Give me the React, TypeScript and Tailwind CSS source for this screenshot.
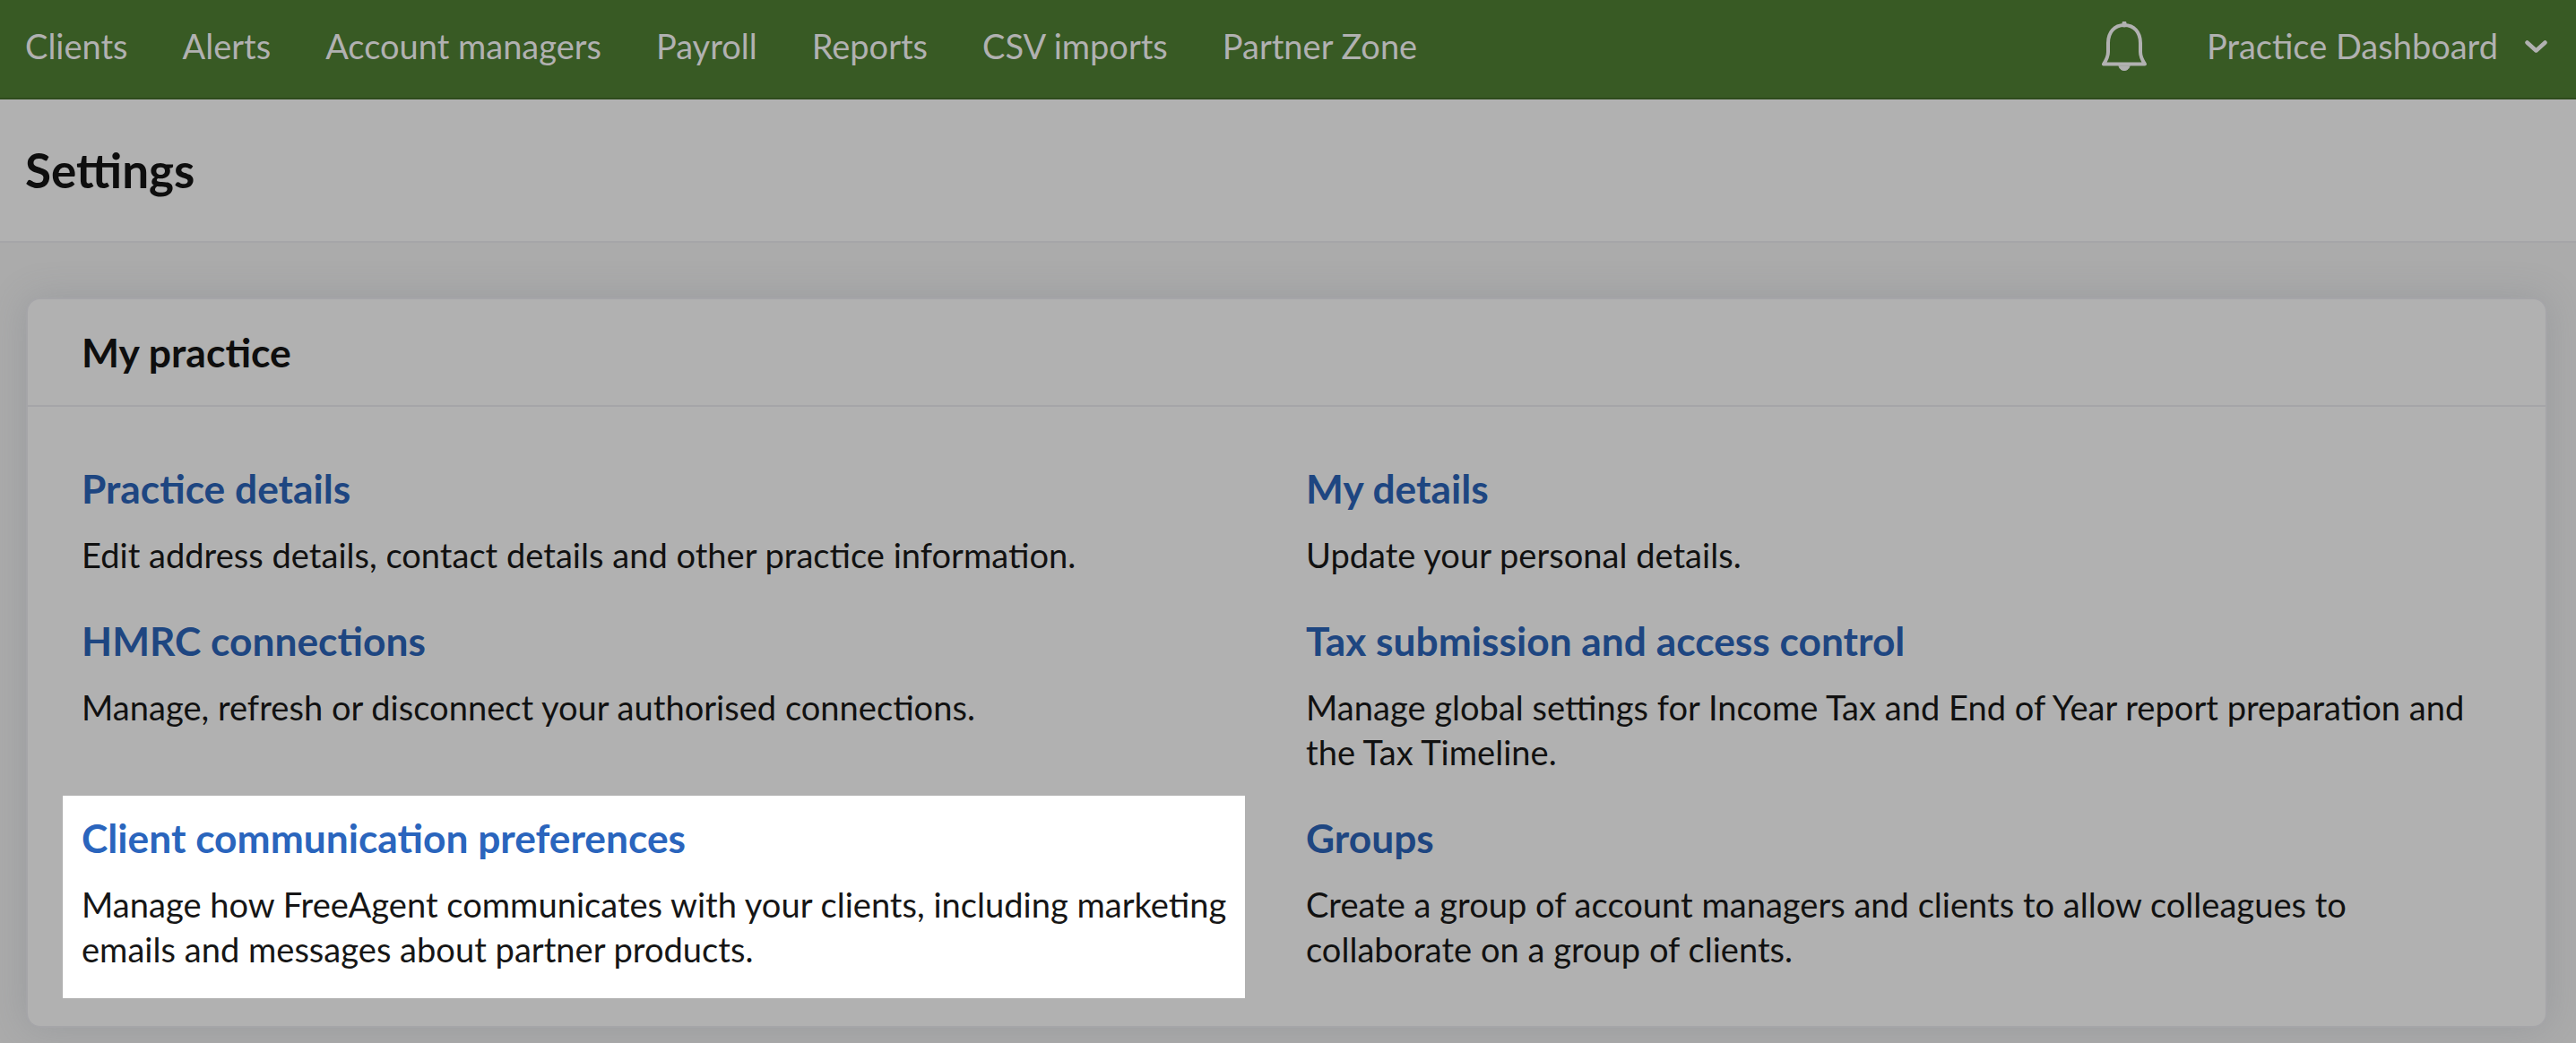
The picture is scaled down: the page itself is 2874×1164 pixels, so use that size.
import React from "react";

const navItems = ["Clients", "Alerts", "Account managers", "Payroll", "Reports", "CSV imports", "Partner Zone"];

function Bell() {
	return (
		<svg viewBox="0 0 50 56" className="h-[56px] w-[50px]" fill="none" stroke="#b1b1b1" strokeWidth="4" strokeLinejoin="round" strokeLinecap="round">
			<path d="M25 4C14 4 7 12 7 24v10c0 5-2 9-5 13.500h46c-3-4.500-5-8.500-5-13.500V24C43 12 36 4 25 4z" />
			<path d="M25 2v2" strokeWidth="5" />
			<path d="M19 49.500c.5 3.500 3 5 6 5s5.500-1.500 6-5z" fill="#b1b1b1" strokeWidth="1" />
		</svg>
	);
}

function Setting({ title, children }: { title: string; children: React.ReactNode }) {
	return (
		<div>
			<a className="block text-[44.300px] leading-[50px] font-bold text-[#1e4681]">{title}</a>
			<p className="mt-[24px] mb-[1px] text-[38.100px] leading-[50px] text-[#111111]">{children}</p>
		</div>
	);
}

export default function App() {
	return (
		<div className="min-h-[1164px] overflow-hidden bg-[#ababab] font-['Lato','Liberation_Sans',sans-serif]">
			<nav className="flex h-[111px] items-center border-b-2 border-[#2f4c1e] bg-[#385a24] pr-[32px] pb-[6px] pl-[28px] text-[38px] text-[#b1b1b1]">
				<div className="flex flex-1 gap-[61px]">
					{navItems.map((item) => (
						<a key={item}>{item}</a>
					))}
				</div>
				<Bell />
				<span className="ml-[67px]">Practice Dashboard</span>
				<svg viewBox="0 0 25 14" className="ml-[30px] h-[14px] w-[25px]" fill="none" stroke="#b1b1b1" strokeWidth="4.500" strokeLinecap="round" strokeLinejoin="round">
					<path d="M2.500 2.500l10 9 10-9" />
				</svg>
			</nav>

			<header className="flex h-[160px] items-center border-b-2 border-[#a5a5a8] bg-[#b1b1b1] pl-[28px]">
				<h1 className="text-[53px] font-bold text-[#0e0e0e]">Settings</h1>
			</header>

			<div className="pt-[61px] pr-[32px] pb-[18px] pl-[29px]">
				<section className="rounded-[16px] border-2 border-[#a5a5a8] bg-[#b1b1b1] shadow-[0_0_40px_rgba(90,100,115,0.22)]">
					<div className="flex h-[120px] items-center border-b-2 border-[#a5a5a8] pl-[60px]">
						<h2 className="text-[44.500px] font-bold text-[#0e0e0e]">My practice</h2>
					</div>
					<div className="grid grid-cols-[1325px_1fr] gap-x-[41px] gap-y-[45px] pt-[66px] pr-[60px] pb-[60px] pl-[60px]">
						<Setting title="Practice details">Edit address details, contact details and other practice information.</Setting>
						<Setting title="My details">Update your personal details.</Setting>
						<Setting title="HMRC connections">Manage, refresh or disconnect your authorised connections.</Setting>
						<Setting title="Tax submission and access control">
							Manage global settings for Income Tax and End of Year report preparation and the Tax Timeline.
						</Setting>
						<div className="-mt-[22px] -mb-[29px] -ml-[21px] w-[1319px] bg-white pt-[22px] pr-[4px] pb-[29px] pl-[21px]">
							<a className="block text-[44.300px] leading-[50px] font-bold text-[#2a65bd]">Client communication preferences</a>
							<p className="mt-[24px] mb-[1px] text-[38.100px] leading-[50px] text-[#161616]">
								Manage how FreeAgent communicates with your clients, including marketing emails and messages about partner products.
							</p>
						</div>
						<Setting title="Groups">
							Create a group of account managers and clients to allow colleagues to collaborate on a group of clients.
						</Setting>
					</div>
				</section>
			</div>
		</div>
	);
}
